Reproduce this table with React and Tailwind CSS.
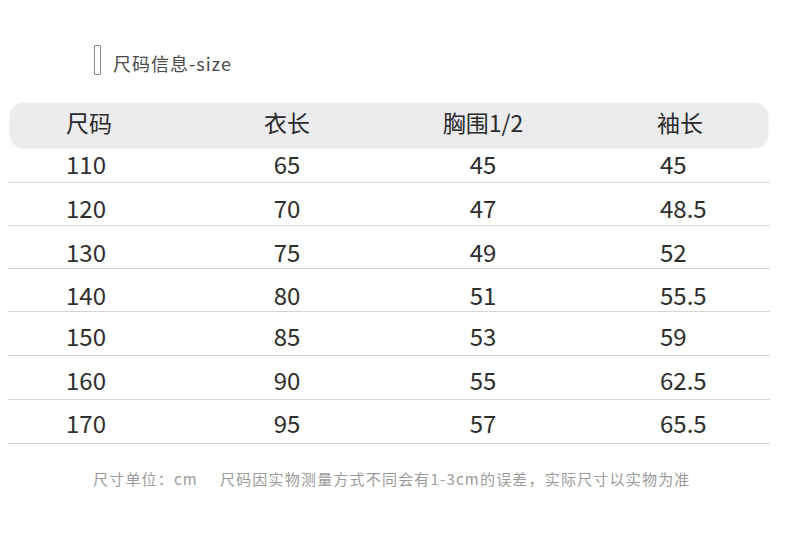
import React from "react";

const rows = [
  ["110", "65", "45", "45"],
  ["120", "70", "47", "48.5"],
  ["130", "75", "49", "52"],
  ["140", "80", "51", "55.5"],
  ["150", "85", "53", "59"],
  ["160", "90", "55", "62.5"],
  ["170", "95", "57", "65.5"],
];

const heights = ["h-[36px] pt-[6px]", "h-[43px] pt-[14px]", "h-[43px] pt-[15px]", "h-[43px] pt-[15px]", "h-[44px] pt-[13px]", "h-[44px] pt-[13px]", "h-[44px] pt-[12px]"];

function Cells({ a, b, c, d, head }) {
  return (
    <div className="flex items-start">
      <div className={head ? "w-[217px] pl-[56px]" : "w-[219px] pl-[58px]"}>{a}</div>
      <div className="w-[120px] text-center">{b}</div>
      <div className="w-[76px]" />
      <div className="w-[120px] text-center">{c}</div>
      <div className={head ? "w-[114px]" : "w-[117px]"} />
      <div>{d}</div>
    </div>
  );
}

export default function App() {
  return (
    <div
      className="w-[790px] h-[540px] bg-white overflow-hidden"
      style={{ fontFamily: '"Noto Sans CJK SC", "Noto Sans", sans-serif' }}
    >
      <div className="flex items-center pt-[45px] pl-[94px] h-[75px]">
        <div className="w-[7px] h-[30px] border-[1.5px] border-[#8a8a8a] rounded-[1px]" />
        <div className="ml-[12px] text-[18px] leading-[20px] tracking-[1px] text-[#4a4a4a] mt-[6px]">尺码信息-size</div>
      </div>
      <div className="pt-[28px] pl-[8px] w-[770px]">
        <div className="h-[44px] ml-[2px] w-[758px] rounded-[14px] bg-[#ececee] shadow-[0_1px_3px_rgba(0,0,0,0.12)] pt-[6px] text-[23px] leading-[26px] text-[#2a2a2a]">
          <Cells a="尺码" b="衣长" c="胸围1/2" d="袖长" head />
        </div>
        {rows.map((r, i) => (
          <div
            key={i}
            className={`${heights[i]} border-b-[1.5px] border-[#d4d4d4] text-[24px] leading-[22px] text-[#2e2e2e]`}
          >
            <Cells a={r[0]} b={r[1]} c={r[2]} d={r[3]} />
          </div>
        ))}
      </div>
      <div className="pt-[26px] pl-[93px] text-[15px] leading-[18px] tracking-[1.2px] text-[#9a9a9a] flex">
        <span>尺寸单位：cm</span>
        <span className="ml-[22px]">尺码因实物测量方式不同会有1-3cm的误差，实际尺寸以实物为准</span>
      </div>
    </div>
  );
}
